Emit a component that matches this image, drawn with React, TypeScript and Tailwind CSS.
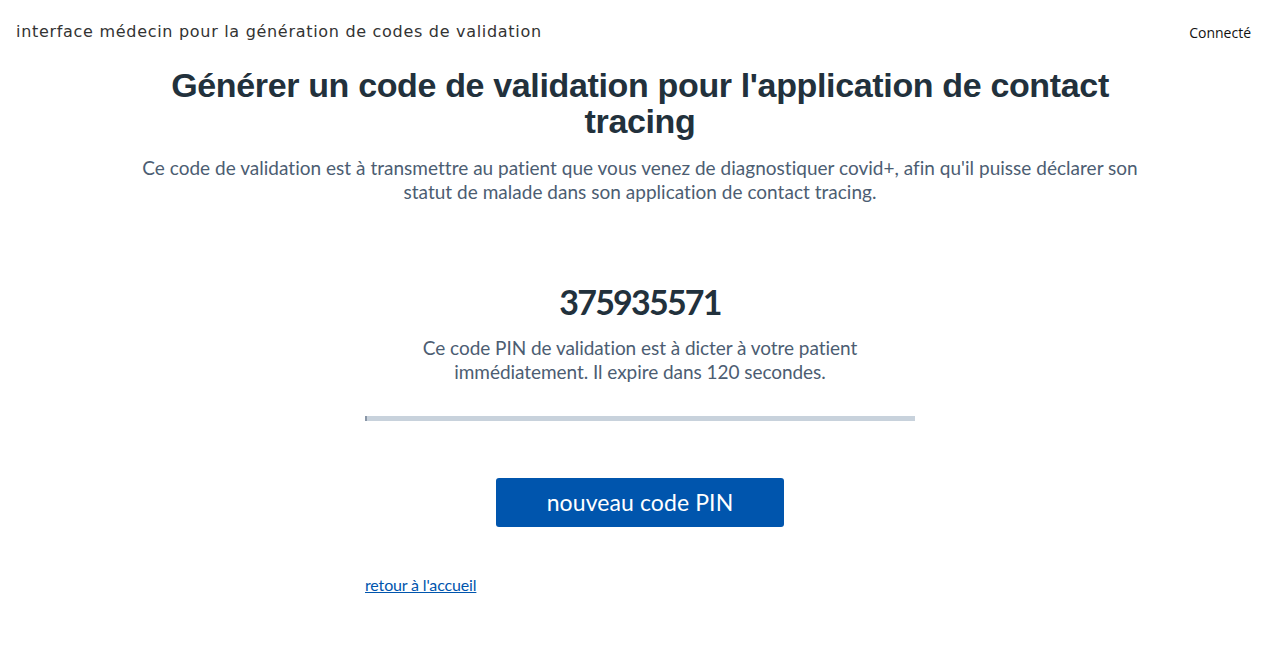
import React from "react";

export default function App() {
  const body = { fontFamily: "Lato, 'Noto Sans', sans-serif" };
  return (
    <div className="min-h-[648px] bg-white" style={body}>
      <header className="flex items-center justify-between h-[64px] px-4">
        <div
          className="text-[16px] tracking-[0.7px] text-[#333333]"
          style={{ fontFamily: "'DejaVu Sans', sans-serif", fontWeight: 400 }}
        >
          interface médecin pour la génération de codes de validation
        </div>
        <div className="text-[14px] text-[#111] pr-[13px]" style={{ fontFamily: "'Open Sans', sans-serif" }}>
          Connecté
        </div>
      </header>
      <main className="flex flex-col items-center">
        <h1
          className="w-[1000px] text-center text-[34px] leading-[36px] font-bold tracking-[-0.35px] text-[#22313c] mt-[3px]"
          style={{ fontFamily: "'Liberation Sans', Arial, sans-serif" }}
        >
          Générer un code de validation pour l'application de contact tracing
        </h1>
        <p className="w-[1000px] text-center text-[19px] leading-[24px] tracking-[0.02px] text-[#4c5d72] mt-[17px]">
          Ce code de validation est à transmettre au patient que vous venez de diagnostiquer covid+, afin qu'il puisse déclarer son statut de malade dans son application de contact tracing.
        </p>
        <div className="w-[550px] flex flex-col items-center mt-[78px]">
          <div className="text-[34px] leading-[40px] font-bold tracking-[-1.8px] text-[#22313c]">375935571</div>
          <p className="text-center text-[19px] leading-[24px] tracking-[-0.05px] text-[#4c5d72] mt-[14px] w-[460px]">
            Ce code PIN de validation est à dicter à votre patient immédiatement. Il expire dans 120 secondes.
          </p>
          <div className="w-full h-[5px] bg-[#c8d2dc] mt-[32px] flex">
            <div className="w-[2px] h-full bg-[#8a97a8]" />
          </div>
          <button className="mt-[57px] w-[288px] h-[49px] bg-[#0055ad] rounded-[3px] text-white text-[23px] tracking-[0.1px]">
            nouveau code PIN
          </button>
          <div className="w-full mt-[46px]">
            <a href="#" className="text-[16px] tracking-[-0.15px] text-[#0055ad] underline">
              retour à l'accueil
            </a>
          </div>
        </div>
      </main>
    </div>
  );
}
